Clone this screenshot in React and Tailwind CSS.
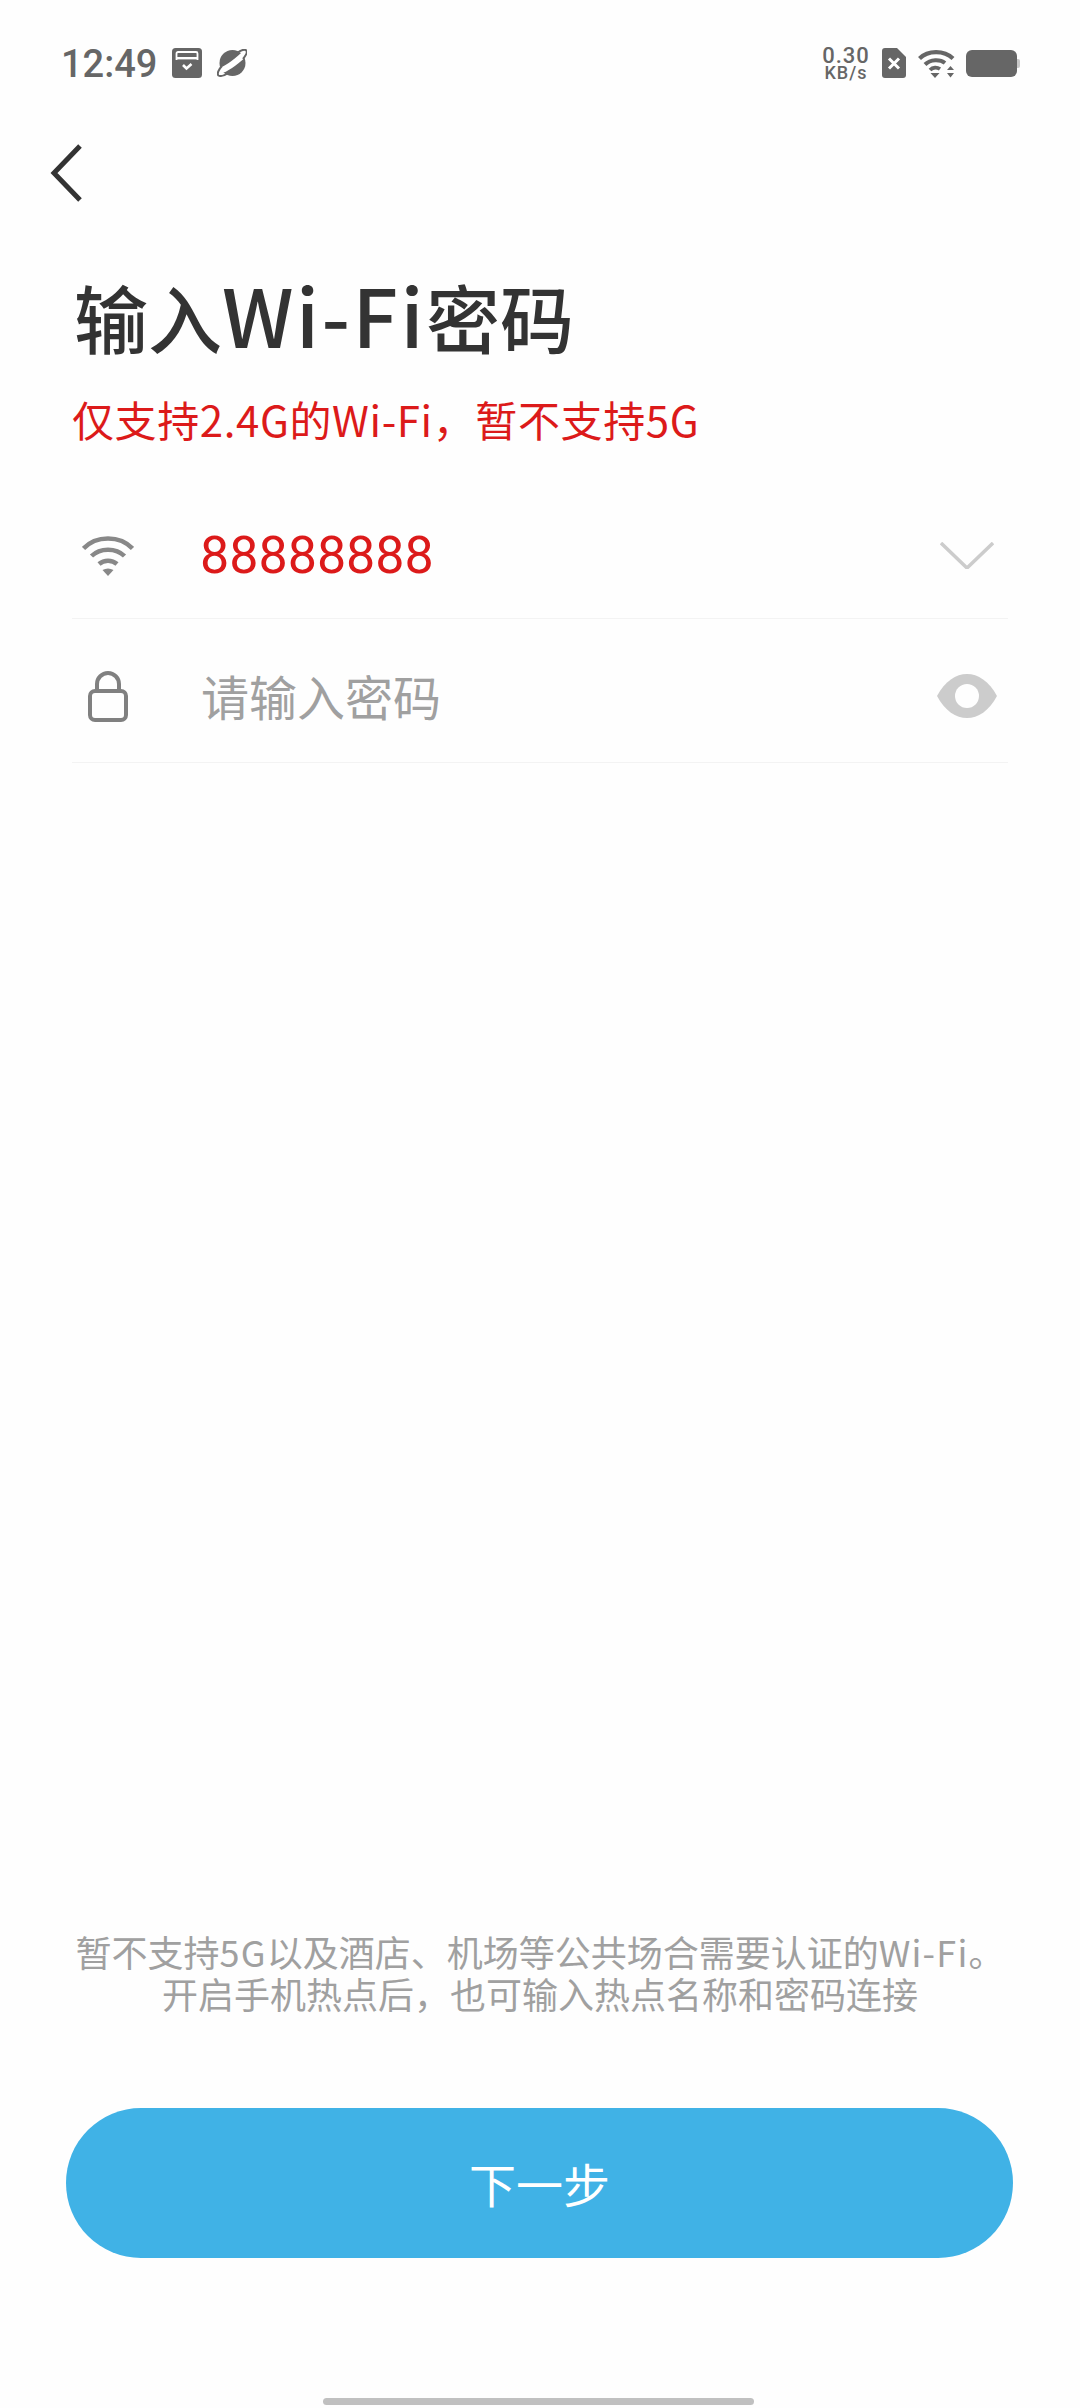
const cjk = "font-['Noto_Sans_CJK_SC','Noto_Sans',sans-serif]";

function CalendarIcon() {
  return (
    <svg width="30" height="30" viewBox="0 0 30 30">
      <rect width="30" height="30" rx="3.500" fill="#666" />
      <path d="M4.500 12V5.500a1.500 1.500 0 0 1 1.500-1.500h18a1.500 1.500 0 0 1 1.500 1.500V12" fill="none" stroke="#fff" strokeWidth="1.800" />
      <rect x="4" y="9" width="22" height="2.400" fill="#fff" />
      <path d="M11 17l3.500 3.500 5-4.500" fill="none" stroke="#fff" strokeWidth="2.600" />
    </svg>
  );
}

function PlanetIcon() {
  return (
    <svg width="30" height="28" viewBox="0 0 30 28">
      <circle cx="15.500" cy="14" r="13" fill="#666" />
      <path d="M3 21.500C10 20 21 11 27.500 5" stroke="#fff" strokeWidth="6" fill="none" />
      <path d="M5 17C1 21 0 25 1.500 26.500C4 28 9 25.500 12 23.500" stroke="#666" strokeWidth="2" fill="none" />
      <path d="M20 4C24 1 28 0 29.300 1.500C30.500 3 28.500 7 26 10" stroke="#666" strokeWidth="2" fill="none" />
    </svg>
  );
}

function SimIcon() {
  return (
    <svg width="24" height="30" viewBox="0 0 24 30">
      <path fill="#666" d="M3 0h12l9 9v18a3 3 0 0 1-3 3H3a3 3 0 0 1-3-3V3a3 3 0 0 1 3-3z" />
      <path d="M7 10.500l10 10M17 10.500l-10 10" stroke="#fff" strokeWidth="3" />
    </svg>
  );
}

function StatusWifi() {
  return (
    <svg width="37" height="29" viewBox="0 0 37 29" fill="none">
      <path d="M1.500 9.500C10 1 26 1 35 9.500" stroke="#666" strokeWidth="4.200" />
      <path d="M7 15.500C12.500 10 22 10 27 14" stroke="#666" strokeWidth="4" />
      <path d="M12 21C15 18 19 18 22 20" stroke="#666" strokeWidth="3.800" />
      <path d="M12.500 24h9l-4.500 5zM29 21l3.500-4 3.500 4zM29 24h7l-3.500 4.500z" fill="#666" />
    </svg>
  );
}

function Battery() {
  return (
    <div className="flex items-center">
      <div className="w-[51px] h-[27px] rounded-[6px] bg-[#666666]" />
      <div className="w-[3px] h-[9px] rounded-r-[2px] bg-[#c8c8c8]" />
    </div>
  );
}

function WifiIcon() {
  return (
    <svg width="52" height="40" viewBox="0 0 52 40" fill="none" stroke="#888888" strokeWidth="4.500">
      <path d="M1.500 12.500C14 -1 38 -1 50.500 12.500" />
      <path d="M9.500 20C18 11.500 34 11.500 42.500 20" />
      <path d="M17 28C22 23.500 30 23.500 35 28" />
      <path d="M20.500 34C24 32 28 32 31.500 34L26 40Z" fill="#888888" stroke="none" />
    </svg>
  );
}

function LockIcon() {
  return (
    <svg width="40" height="51" viewBox="0 0 40 51" fill="none" stroke="#808080" strokeWidth="4">
      <rect x="2" y="20" width="36" height="29" rx="5" />
      <path d="M9 20v-7a11 11 0 0 1 22 0v7" />
    </svg>
  );
}

function Chevron() {
  return (
    <svg width="54" height="27" viewBox="0 0 54 27" fill="none" stroke="#cccccc" strokeWidth="3.500">
      <path d="M1 1l26 25L53 1" />
    </svg>
  );
}

function EyeIcon() {
  return (
    <svg width="60" height="44" viewBox="0 0 60 44">
      <path fill="#cccccc" d="M0 22C8 7 19 0 30 0s22 7 30 22C52 37 41 44 30 44S8 37 0 22z" />
      <circle cx="30" cy="22" r="12" fill="#fefefe" />
    </svg>
  );
}

function Row({ icon, iconClass, children, right, height }) {
  return (
    <div className={`flex items-center border-b border-[#f3f3f3] ${height}`}>
      <div className={`w-[128px] flex shrink-0 ${iconClass}`}>{icon}</div>
      <div className="flex-1">{children}</div>
      <div className="w-[60px] mr-[11px] flex justify-center">{right}</div>
    </div>
  );
}

export default function App() {
  return (
    <div className={`relative w-[1080px] h-[2408px] bg-[#fefefe] flex flex-col overflow-hidden ${cjk}`}>
      <div className="h-[96px] pt-[47px] pl-[61px] pr-[60px] flex items-start justify-between">
        <div className="flex items-center h-[32px]">
          <span className="font-['Roboto',sans-serif] text-[38px] leading-none pt-[2px] font-medium text-[#666666] w-[111px]">12:49</span>
          <CalendarIcon />
          <span className="w-[15px]" />
          <PlanetIcon />
        </div>
        <div className="flex items-center h-[32px]">
          <div className="flex flex-col items-center w-[48px] font-['Roboto',sans-serif] font-medium text-[#666666]">
            <span className="text-[22px] leading-[19px] tracking-[1px]">0.30</span>
            <span className="text-[18px] leading-[15px] tracking-[1px]">KB/s</span>
          </div>
          <span className="w-[12px]" />
          <SimIcon />
          <span className="w-[12px]" />
          <StatusWifi />
          <span className="w-[11px]" />
          <Battery />
        </div>
      </div>

      <div className="h-[113px] mt-[20px] pl-[50px] flex items-center">
        <svg width="32" height="58" viewBox="0 0 32 58" fill="none" stroke="#333333" strokeWidth="5">
          <path d="M30 2L4 29l26 27" />
        </svg>
      </div>

      <h1 className="pl-[74px] mt-[39px] text-[74px] leading-[90px] font-medium text-[#333333]">输入<span className="text-[80px] font-medium tracking-[2.500px]">Wi-Fi</span>密码</h1>
      <p className="pl-[72px] mt-[30px] text-[42px] leading-[56px] tracking-[0.600px] text-[#dc1a1a]">仅支持2.4G的Wi-Fi，暂不支持5G</p>

      <div className="ml-[72px] mr-[72px] mt-[26px]">
        <Row height="h-[146px] pt-[20px]" iconClass="pl-[10px]" icon={<WifiIcon />} right={<Chevron />}>
          <span className="text-[52px] leading-none text-[#dc1a1a] font-['Roboto',sans-serif]">88888888</span>
        </Row>
        <Row height="h-[144px] pt-[11px]" iconClass="pl-[16px]" icon={<LockIcon />} right={<EyeIcon />}>
          <span className="text-[48px] leading-none text-[#a0a0a0] pl-[1px]">请输入密码</span>
        </Row>
      </div>

      <div className="mt-auto flex flex-col items-center text-[36px] leading-[42px] text-[#a0a0a0]">
        <p>暂不支持<span className="tracking-[1.200px]">5G</span>以及酒店、机场等公共场合需要认证的<span className="tracking-[1.200px]">Wi-Fi</span>。</p>
        <p>开启手机热点后，也可输入热点名称和密码连接</p>
      </div>

      <button className="ml-[66px] mr-[67px] mt-[94px] h-[150px] rounded-[75px] bg-[#40b2e6] text-white text-[47px] leading-none pb-[2px]">下一步</button>

      <div className="mt-[140px] mb-[3px] ml-[323px] w-[431px] h-[7px] rounded-full bg-[#c0c0c0]" />
    </div>
  );
}
